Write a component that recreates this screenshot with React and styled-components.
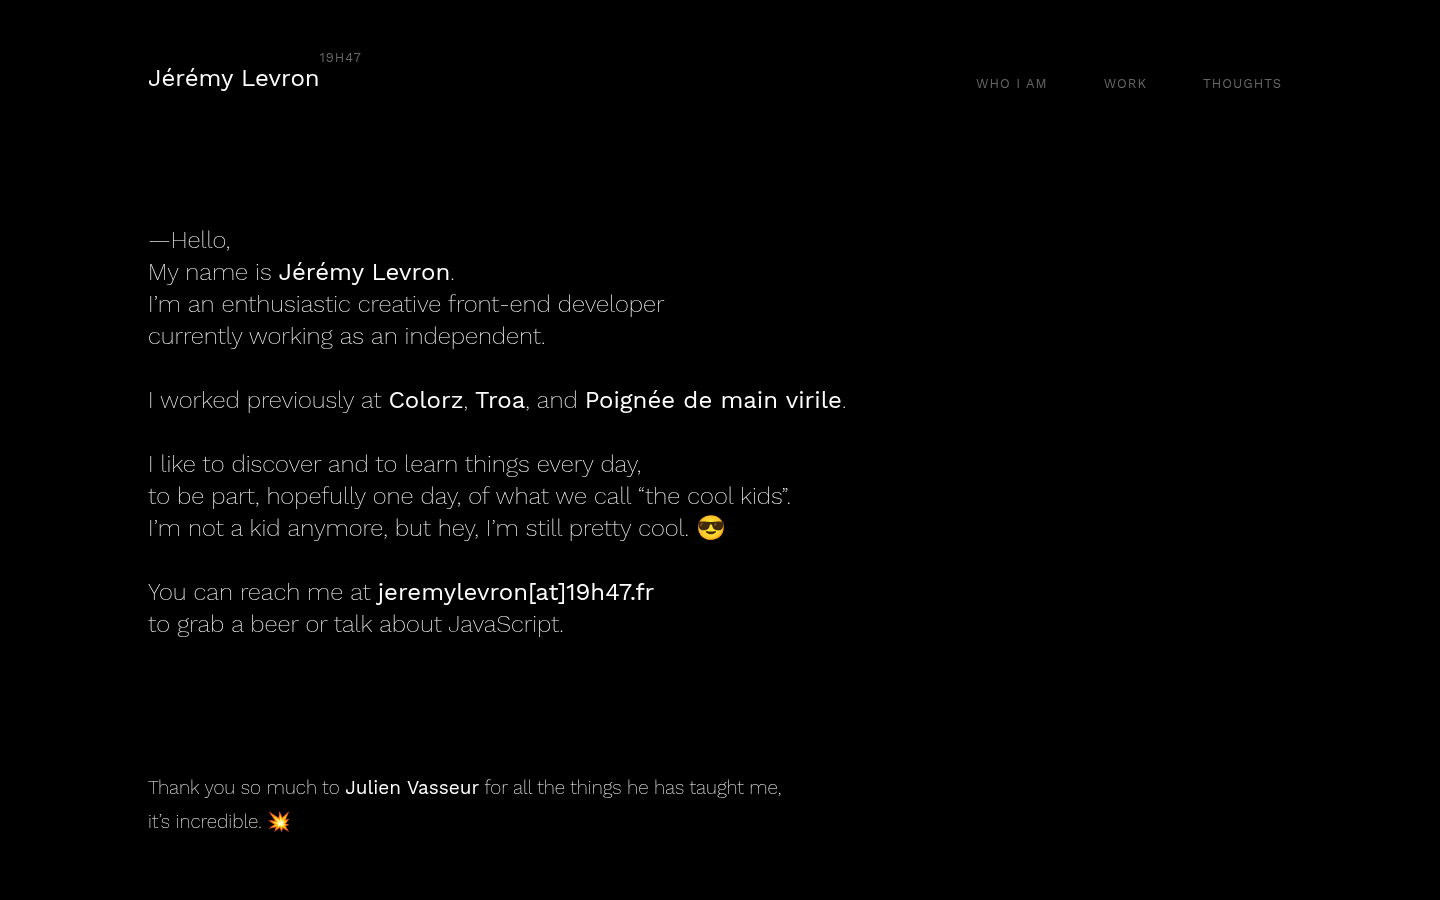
import React from 'react';
import styled, { createGlobalStyle } from 'styled-components'

const GlobalStyle = createGlobalStyle`
  body {
    margin: 0;
    background: #000;
    color: #fff;
    font-family: "Work Sans", Inter, "Liberation Sans", sans-serif;
    -webkit-font-smoothing: antialiased;
  }
`

const Page = styled.div`
  min-height: 100vh;
  box-sizing: border-box;
  padding: 46px 148px 62px;
  will-change: opacity;
`

const Header = styled.header`
  display: flex;
  justify-content: space-between;
  align-items: flex-end;
`

const Brand = styled.a`
  display: flex;
  align-items: flex-start;
  padding-bottom: 2px;
  color: #fff;
  font-size: 24px;
  line-height: 32px;
  text-decoration: none;
`

const BrandName = styled.span`
  padding-top: 16px;
`

const BrandTag = styled.span`
  color: #666;
  font-size: 13px;
  line-height: 24px;
  letter-spacing: 1px;
`

const Nav = styled.nav`
  display: flex;
  gap: 56px;
  padding-right: 10px;
`

const NavLink = styled.a`
  color: #666;
  font-size: 13px;
  line-height: 24px;
  letter-spacing: 1px;
  text-decoration: none;
  text-transform: uppercase;
`

const Intro = styled.main`
  padding-top: 128px;
  font-size: 24px;
  font-weight: 200;
  line-height: 32px;
`

const Paragraph = styled.p`
  margin: 0 0 32px;
`

const Thanks = styled.footer`
  padding-top: 99px;
  font-size: 19px;
  font-weight: 200;
  line-height: 34px;
`

const Strong = styled.a`
  color: #fff;
  font-weight: 400;
  text-decoration: none;
`

const links = ['Who I am', 'Work', 'Thoughts']

const App = () => {
  return (
    <Page>
      <GlobalStyle />
      <Header>
        <Brand href="#home">
          <BrandName>Jérémy Levron</BrandName>
          <BrandTag>19H47</BrandTag>
        </Brand>
        <Nav>
          {links.map((link) => (
            <NavLink key={link} href="#">{link}</NavLink>
          ))}
        </Nav>
      </Header>
      <Intro>
        <Paragraph>
          —Hello,<br />
          My name is <Strong href="#">Jérémy Levron</Strong>.<br />
          I’m an enthusiastic creative front-end developer<br />
          currently working as an independent.
        </Paragraph>
        <Paragraph>
          I worked previously at <Strong href="#">Colorz</Strong>, <Strong href="#">Troa</Strong>, and <Strong href="#">Poignée de main virile</Strong>.
        </Paragraph>
        <Paragraph>
          I like to discover and to learn things every day,<br />
          to be part, hopefully one day, of what we call “the cool kids”.<br />
          I’m not a kid anymore, but hey, I’m still pretty cool. 😎
        </Paragraph>
        <Paragraph>
          You can reach me at <Strong href="#">jeremylevron[at]19h47.fr</Strong><br />
          to grab a beer or talk about JavaScript.
        </Paragraph>
      </Intro>
      <Thanks>
        Thank you so much to <Strong href="#">Julien Vasseur</Strong> for all the things he has taught me,<br />
        it’s incredible. 💥
      </Thanks>
    </Page>
  )
}

export default App
